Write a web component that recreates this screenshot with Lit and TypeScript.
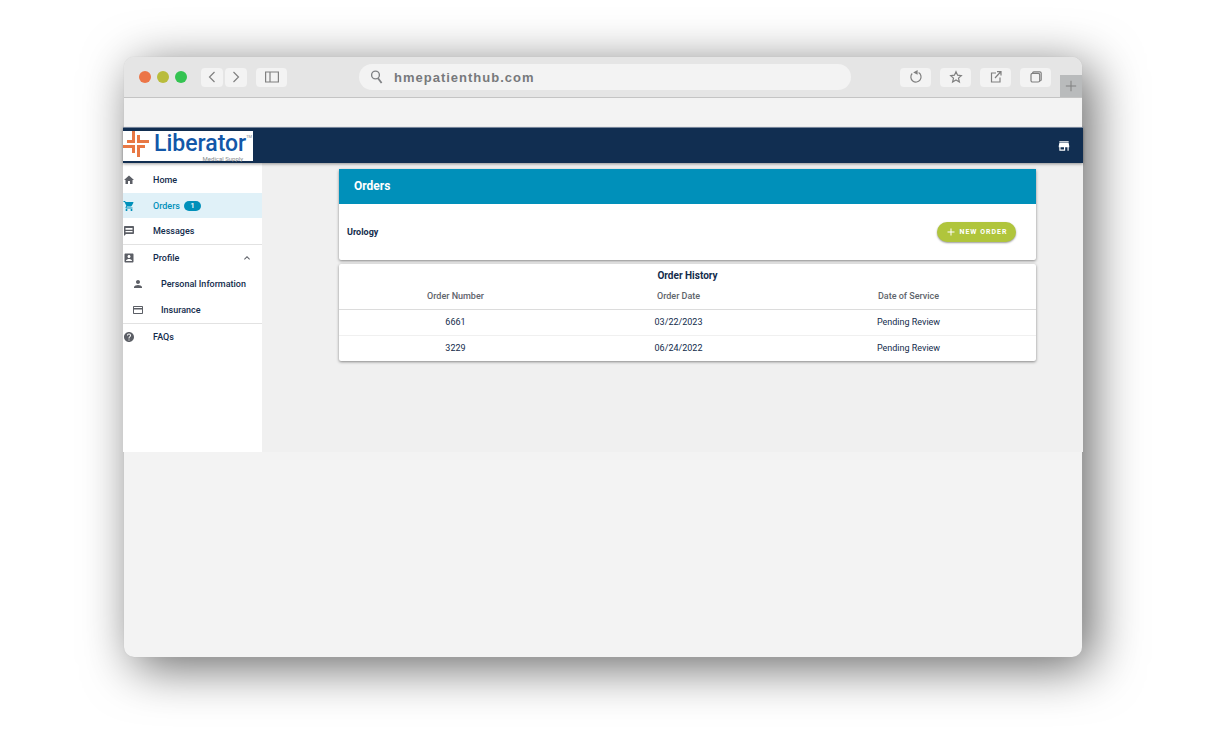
import { LitElement, html, css, svg } from "lit";
import { customElement, property, state } from "lit/decorators.js";

const glyphs: Record<string, string> = {
  home: "M10 20v-6h4v6h5v-8h3L12 3 2 12h3v8z",
  cart: "M7 18c-1.1 0-1.99.9-1.99 2S5.9 22 7 22s2-.9 2-2-.9-2-2-2zM1 2v2h2l3.6 7.59-1.35 2.45c-.16.28-.25.61-.25.96 0 1.1.9 2 2 2h12v-2H7.42c-.14 0-.25-.11-.25-.25l.03-.12.9-1.63h7.45c.75 0 1.41-.41 1.75-1.03l3.58-6.49c.08-.14.12-.31.12-.48 0-.55-.45-1-1-1H5.21l-.94-2H1zm16 16c-1.1 0-1.99.9-1.99 2s.89 2 1.99 2 2-.9 2-2-.9-2-2-2z",
  message: "M20 2H4c-1.1 0-1.99.9-1.99 2L2 22l4-4h14c1.1 0 2-.9 2-2V4c0-1.1-.9-2-2-2zm-1 12.500H5v-2.500h14v2.500zm0-5H5V6h14v3.500z",
  profile: "M3 5v14c0 1.1.89 2 2 2h14c1.1 0 2-.9 2-2V5c0-1.1-.9-2-2-2H5c-1.11 0-2 .9-2 2zm12 4c0 1.66-1.34 3-3 3s-3-1.34-3-3 1.34-3 3-3 3 1.34 3 3zm-9 8c0-2 4-3.100 6-3.100s6 1.100 6 3.100v1H6v-1z",
  person: "M12 12c2.210 0 4-1.790 4-4s-1.790-4-4-4-4 1.790-4 4 1.790 4 4 4zm0 2c-2.670 0-8 1.340-8 4v2h16v-2c0-2.660-5.330-4-8-4z",
  card: "M20 4H4c-1.110 0-1.990.89-1.990 2L2 18c0 1.110.89 2 2 2h16c1.110 0 2-.89 2-2V6c0-1.110-.89-2-2-2zm0 14H4v-7h16v7zm0-10H4V6h16v2z",
  help: "M12 2C6.480 2 2 6.480 2 12s4.480 10 10 10 10-4.480 10-10S17.520 2 12 2zm1 17h-2v-2h2v2zm2.070-7.750l-.9.920C13.450 12.900 13 13.500 13 15h-2v-.5c0-1.100.450-2.100 1.170-2.830l1.240-1.260c.370-.360.590-.860.590-1.410 0-1.100-.9-2-2-2s-2 .9-2 2H8c0-2.210 1.790-4 4-4s4 1.790 4 4c0 .880-.360 1.680-.930 2.250z",
  store: "M20 4H4v2h16V4zm1 10v-2l-1-5H4l-1 5v2h1v6h10v-6h4v6h2v-6h1zm-9 4H6v-4h6v4z",
  plus: "M19 13h-6v6h-2v-6H5v-2h6V5h2v6h6v2z",
  up: "M12 8l-6 6 1.410 1.410L12 10.830l4.590 4.580L18 14z",
};

const glyph = (name: string) =>
  html`<svg class="glyph" viewBox="0 0 24 24" aria-hidden="true">${svg`<path d=${glyphs[name]}></path>`}</svg>`;

@customElement("browser-bar")
class BrowserBar extends LitElement {
  static styles = css`
    :host {
      display: block;
    }
    .bar {
      display: flex;
      align-items: center;
      height: 41px;
      box-sizing: border-box;
      padding-left: 15px;
      background: #e5e5e5;
      border-bottom: 1px solid #c4c4c4;
      border-radius: 10px 10px 0 0;
      overflow: hidden;
    }
    .lights {
      display: flex;
      gap: 6px;
      margin-right: 14px;
    }
    .light {
      width: 12px;
      height: 12px;
      border-radius: 50%;
    }
    .red {
      background: #ec7547;
    }
    .amber {
      background: #b9bc3c;
    }
    .green {
      background: #34c351;
    }
    button {
      display: flex;
      align-items: center;
      justify-content: center;
      width: 31px;
      height: 19px;
      padding: 0;
      border: 0;
      border-radius: 4px;
      background: #f3f3f3;
      color: #808080;
    }
    button svg {
      width: 14px;
      height: 14px;
      fill: none;
      stroke: currentColor;
      stroke-width: 1.2;
    }
    .pair {
      display: flex;
      gap: 2px;
      margin-right: 9px;
    }
    .pair button {
      width: 22px;
    }
    .address {
      display: flex;
      align-items: center;
      flex: 0 1 492px;
      height: 26px;
      margin-left: 72px;
      border-radius: 13px;
      background: #f3f3f3;
      color: #808285;
    }
    .address svg {
      width: 14px;
      height: 14px;
      margin: 0 10px 0 11px;
      fill: none;
      stroke: currentColor;
      stroke-width: 1.4;
    }
    .address input {
      flex: 1;
      min-width: 0;
      padding: 0;
      border: 0;
      outline: 0;
      background: none;
      color: #77797c;
      font: bold 13px "Liberation Sans", Arial, sans-serif;
      letter-spacing: 1px;
    }
    .tools {
      display: flex;
      gap: 9px;
      margin: 0 9px 0 auto;
    }
    .tab {
      align-self: flex-end;
      width: 22px;
      height: 22px;
      border-radius: 0;
      background: #b9bbbc;
    }
    .tab svg {
      width: 12px;
      height: 12px;
    }
  `;
  render() {
    return html`
      <div class="bar">
        <div class="lights">
          <span class="light red"></span><span class="light amber"></span><span class="light green"></span>
        </div>
        <div class="pair">
          <button aria-label="Back"><svg viewBox="0 0 14 14"><path d="M9.500 2 4.500 7l5 5" /></svg></button>
          <button aria-label="Forward"><svg viewBox="0 0 14 14"><path d="M4.500 2 9.500 7l-5 5" /></svg></button>
        </div>
        <button aria-label="Show sidebar">
          <svg viewBox="0 0 14 14"><path d="M.6 2h12.800v10H.6zM5 2V12" /></svg>
        </button>
        <label class="address">
          <svg viewBox="0 0 14 14"><circle cx="5.500" cy="5" r="3.900" /><path d="m8 8.200 3.600 4.800" stroke-width="1.800" /></svg>
          <input type="text" aria-label="Address" .value=${"hmepatienthub.com"} />
        </label>
        <div class="tools">
          <button aria-label="Reload">
            <svg viewBox="0 0 14 14"><path d="M3.200 3.500A5.100 5.100 0 1 0 9.600 2.600" /><path d="M8.600.1v4.600L4.200 2.400z" fill="currentColor" stroke="none" /></svg>
          </button>
          <button aria-label="Bookmark">
            <svg viewBox="0 0 14 14"><path d="m7 1.700 1.600 3.500 3.700.4-2.800 2.500.9 3.800L7 9.900l-3.400 2 .9-3.800-2.800-2.500 3.700-.4z" /></svg>
          </button>
          <button aria-label="Share">
            <svg viewBox="0 0 14 14"><path d="M7 3H2.500v9H11V7.500M6 8l5.500-6M8 1.600h4v4" /></svg>
          </button>
          <button aria-label="Tabs">
            <svg viewBox="0 0 14 14"><rect x="2" y="3.300" width="8.700" height="8.700" rx="1.500" /><path d="M3.500 2.900Q4 1.800 5 1.800h5.700q1.500 0 1.500 1.500V9.500q0 1-1 1.500" /></svg>
          </button>
        </div>
        <button class="tab" aria-label="New tab">
          <svg viewBox="0 0 14 14"><path d="M7 1v12M1 7h12" /></svg>
        </button>
      </div>
    `;
  }
}

@customElement("side-nav")
class SideNav extends LitElement {
  @state() private open = true;
  @property({ type: Number }) orders = 1;

  static styles = css`
    :host {
      display: block;
      background: #fff;
      padding-top: 4px;
      box-sizing: border-box;
    }
    .item {
      display: flex;
      align-items: center;
      width: 100%;
      height: 26px;
      box-sizing: border-box;
      padding: 0;
      border: 0;
      background: none;
      color: #132c4c;
      font: 500 9px Roboto, sans-serif;
      text-decoration: none;
      text-align: left;
    }
    .glyph {
      width: 12px;
      height: 12px;
      margin-right: 18px;
      fill: #5c5f66;
      flex: none;
    }
    .sub {
      padding-left: 9px;
    }
    .sub .glyph {
      margin-right: 17px;
    }
    .active {
      height: 25px;
      background: #e0f1f8;
      color: #0090ba;
    }
    .active .glyph {
      fill: #0090ba;
    }
    .badge {
      margin-left: 4px;
      width: 17px;
      height: 10px;
      border-radius: 5px;
      background: #0090ba;
      color: #fff;
      font-size: 8px;
      line-height: 10px;
      text-align: center;
    }
    .rule {
      border-top: 1px solid #e2e2e2;
    }
    .caret {
      display: flex;
      margin-left: auto;
    }
    .caret .glyph {
      margin-right: 9px;
    }
  `;
  render() {
    return html`
      <nav>
        <a class="item" href="#home">${glyph("home")}Home</a>
        <a class="item active" href="#orders">${glyph("cart")}Orders<span class="badge">${this.orders}</span></a>
        <a class="item" href="#messages">${glyph("message")}Messages</a>
        <div class="rule"></div>
        <button class="item" aria-expanded=${this.open} @click=${() => (this.open = !this.open)}>
          ${glyph("profile")}Profile<span class="caret">${glyph("up")}</span>
        </button>
        ${this.open
          ? html`<a class="item sub" href="#personal">${glyph("person")}Personal Information</a>
              <a class="item sub" href="#insurance">${glyph("card")}Insurance</a>`
          : null}
        <div class="rule"></div>
        <a class="item" href="#faqs">${glyph("help")}FAQs</a>
      </nav>
    `;
  }
}

@customElement("orders-page")
class OrdersPage extends LitElement {
  private rows = [
    { id: "6661", date: "03/22/2023", service: "Pending Review" },
    { id: "3229", date: "06/24/2022", service: "Pending Review" },
  ];

  static styles = css`
    :host {
      display: block;
      padding: 6px 47px 0 77px;
      color: #132c4c;
      font: 9px Roboto, sans-serif;
    }
    .card {
      background: #fff;
      border-radius: 2px;
      box-shadow: 0 1px 3px rgba(0, 0, 0, 0.45);
      margin-bottom: 4px;
    }
    h1 {
      margin: 0;
      padding-left: 15px;
      background: #0090ba;
      color: #fff;
      font-size: 12px;
      font-weight: 700;
      line-height: 35px;
    }
    .line {
      display: flex;
      align-items: center;
      justify-content: space-between;
      height: 56px;
      padding: 0 20px 0 8px;
    }
    h2 {
      margin: 0;
      font-size: 9px;
      font-weight: 700;
    }
    .new {
      display: flex;
      align-items: center;
      justify-content: center;
      gap: 2px;
      width: 79px;
      height: 20px;
      padding: 0;
      border: 0;
      border-radius: 10px;
      background: #b0c53c;
      box-shadow: 0 1px 2px rgba(0, 0, 0, 0.4);
      color: #fff;
      font: 700 7px Roboto, sans-serif;
      letter-spacing: 1px;
    }
    .glyph {
      width: 12px;
      height: 12px;
      fill: currentColor;
    }
    table {
      width: 100%;
      table-layout: fixed;
      border-collapse: collapse;
      text-align: center;
    }
    caption {
      height: 23px;
      font-size: 10px;
      font-weight: 700;
      line-height: 23px;
    }
    th,
    td {
      box-sizing: border-box;
      padding: 0 4px 0 0;
      height: 26px;
      border-top: 1px solid #f0f0f0;
    }
    th {
      height: 22px;
      padding-bottom: 4px;
      border-top: 0;
      color: #60646b;
      font-weight: 500;
    }
    .first td {
      border-top-color: #dcdcdc;
    }
    .number {
      width: 34%;
    }
    .date {
      width: 30%;
    }
  `;
  render() {
    return html`
      <section class="card">
        <h1>Orders</h1>
        <div class="line">
          <h2>Urology</h2>
          <button class="new">${glyph("plus")}NEW ORDER</button>
        </div>
      </section>
      <section class="card">
        <table>
          <caption>Order History</caption>
          <thead>
            <tr>
              <th class="number">Order Number</th>
              <th class="date">Order Date</th>
              <th>Date of Service</th>
            </tr>
          </thead>
          <tbody>
            ${this.rows.map(
              (r, i) => html`<tr class=${i === 0 ? "first" : "next"}>
                <td>${r.id}</td>
                <td>${r.date}</td>
                <td>${r.service}</td>
              </tr>`
            )}
          </tbody>
        </table>
      </section>
    `;
  }
}

@customElement("app-root")
class AppRoot extends LitElement {
  static styles = css`
    :host {
      display: flex;
      flex-direction: column;
      box-sizing: border-box;
      min-height: 100vh;
      padding: 57px 124px 78px;
      background: #fff;
    }
    .window {
      flex: 1;
      border-radius: 10px;
      background: #f3f3f3;
      box-shadow: 0 0 1px #bbb, 10px 10px 50px rgba(0, 0, 0, 0.6);
    }
    .strip {
      height: 27px;
      border-bottom: 2px solid #fafafa;
    }
    .app {
      margin: 0 -1px;
      background: #f0f0f0;
    }
    .top {
      display: flex;
      align-items: center;
      justify-content: space-between;
      height: 36px;
      box-sizing: border-box;
      border-top: 1px solid #75849a;
      background: #112e51;
      box-shadow: 0 1px 3px rgba(0, 0, 0, 0.4);
      position: relative;
    }
    .logo {
      display: flex;
      gap: 4px;
      width: 130px;
      height: 30px;
      background: #fff;
    }
    .mark {
      width: 27px;
      height: 27px;
      fill: none;
      stroke: #e87844;
      stroke-width: 3;
    }
    .words {
      display: flex;
      flex-direction: column;
    }
    .name {
      display: flex;
      color: #1257a8;
      font: 500 23px/26px Roboto, sans-serif;
    }
    .tagline {
      align-self: flex-end;
      margin-right: 9px;
      color: #85888c;
      font: 6px/4px Roboto, sans-serif;
    }
    .tm {
      color: #85888c;
      font: 4px/12px Roboto, sans-serif;
    }
    .shop {
      display: flex;
      margin-right: 12px;
      padding: 0;
      border: 0;
      background: none;
    }
    .glyph {
      width: 14px;
      height: 14px;
      fill: #fff;
    }
    .body {
      display: grid;
      grid-template-columns: 139px 1fr;
      min-height: 289px;
    }
  `;
  render() {
    return html`
      <div class="window">
        <browser-bar></browser-bar>
        <div class="strip"></div>
        <div class="app">
          <header class="top">
            <div class="logo">
              <svg class="mark" viewBox="1 1 27 27" aria-hidden="true">
                <path d="M11.500 1v10.500H5M1 16.500h10.500V23M16.500 5v6.500H27M16.500 27V16.500H23" />
              </svg>
              <div class="words">
                <div class="name">Liberator<span class="tm">TM</span></div>
                <div class="tagline">Medical Supply</div>
              </div>
            </div>
            <button class="shop" aria-label="Store">${glyph("store")}</button>
          </header>
          <div class="body">
            <side-nav></side-nav>
            <orders-page></orders-page>
          </div>
        </div>
      </div>
    `;
  }
}
